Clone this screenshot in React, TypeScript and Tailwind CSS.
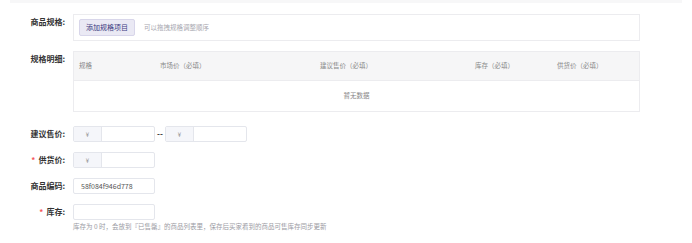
import type { ReactNode } from "react";

const font = { fontFamily: '"Noto Sans CJK SC", "Noto Sans", sans-serif' };

function Label({ children, required }: { children: ReactNode; required?: boolean }) {
  return (
    <div className="w-[65px] shrink-0 text-right text-[8px] leading-[16px] font-semibold text-[#333]">
      {required && <span className="mr-[3px] text-[#f5555a]">*</span>}
      {children}
    </div>
  );
}

function PriceInput() {
  return (
    <div className="flex h-[16px] w-[82px] rounded-[2px] border border-[#e4e6ec] bg-white">
      <div className="flex w-[28px] items-center justify-center border-r border-[#e4e6ec] bg-[#f5f6fa] text-[6px] text-[#888]">
        ¥
      </div>
      <div className="flex-1" />
    </div>
  );
}

const columns = [
  { title: "规格", w: "w-[81px]" },
  { title: "市场价（必填）", w: "w-[160px]" },
  { title: "建议售价（必填）", w: "w-[155px]" },
  { title: "库存（必填）", w: "w-[82px]" },
  { title: "供货价（必填）", w: "flex-1" },
];

export default function App() {
  return (
    <div className="h-[243px] w-[692px] bg-white" style={font}>
      <div className="mx-[10px] h-[3px] bg-[#f7f7f8]" />

      <div className="mt-[11px] flex flex-col gap-[10px]">
        <div className="flex gap-[8px]">
          <Label>商品规格:</Label>
          <div className="flex h-[27px] w-[567px] items-center gap-[9px] border border-[#ececef] px-[5px]">
            <button className="h-[17px] rounded-[2px] border border-[#d8d6ea] bg-[#eae9f4] px-[6px] text-[7px] text-[#3b3a80]">
              添加规格项目
            </button>
            <span className="text-[6.5px] text-[#a8a8b0]">可以拖拽规格调整顺序</span>
          </div>
        </div>

        <div className="flex gap-[8px]">
          <Label>规格明细:</Label>
          <div className="w-[567px] border border-[#ececef]">
            <div className="flex h-[28px] items-center bg-[#f6f6f7] text-[6.5px] text-[#888]">
              {columns.map((c) => (
                <div key={c.title} className={`${c.w} pl-[5px]`}>
                  {c.title}
                </div>
              ))}
            </div>
            <div className="flex h-[31px] items-center justify-center border-t border-[#ececef] text-[6.5px] text-[#888]">
              暂无数据
            </div>
          </div>
        </div>
      </div>

      <div className="mt-[14px] flex flex-col gap-[10px]">
        <div className="flex items-center gap-[8px]">
          <Label>建议售价:</Label>
          <div className="flex items-center">
            <PriceInput />
            <span className="w-[10px] text-center text-[8px] font-bold leading-[16px] text-[#333]">--</span>
            <PriceInput />
          </div>
        </div>

        <div className="flex items-center gap-[8px]">
          <Label required>供货价:</Label>
          <PriceInput />
        </div>

        <div className="flex items-center gap-[8px]">
          <Label>商品编码:</Label>
          <div className="flex h-[16px] w-[82px] items-center rounded-[2px] border border-[#e4e6ec] px-[7px] text-[7px] text-[#555]">
            58f084f946d778
          </div>
        </div>

        <div className="flex gap-[8px]">
          <Label required>库存:</Label>
          <div>
            <div className="h-[16px] w-[82px] rounded-[2px] border border-[#e4e6ec]" />
            <div className="mt-[2px] text-[6.5px] leading-[9px] text-[#9a9aa3]">
              库存为 0 时，会放到『已售罄』的商品列表里，保存后买家看到的商品可售库存同步更新
            </div>
          </div>
        </div>
      </div>
    </div>
  );
}
